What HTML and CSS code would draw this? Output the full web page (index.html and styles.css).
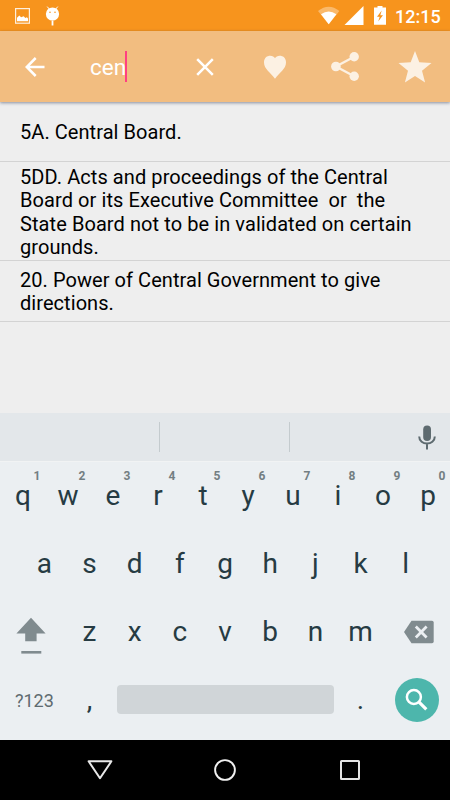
FILE: index.html
```html
<!DOCTYPE html>
<html lang="en">
<head>
<meta charset="utf-8">
<title>Search</title>
<link rel="stylesheet" href="styles.css">
</head>
<body>
<div class="screen">
  <header class="status">
    <svg class="status-icons" width="60" height="31" viewBox="0 0 60 31">
      <rect x="15.6" y="8.6" width="13.8" height="14.6" fill="none" stroke="#fff" stroke-opacity=".85" stroke-width="1.2"/>
      <path d="M17 21.3v-3.500l2.300-2.200 1.800 1.600 2.600-1 1.600 1.700 1.600-.6 1.100 1.200v2.800z" fill="#fff"/>
      <path d="M47.200 6.600l2.300 2.700M57.800 6.600l-2.300 2.700" stroke="#fff" stroke-width="1"/>
      <ellipse cx="52.500" cy="14" rx="6.600" ry="6.600" fill="#fff"/>
      <circle cx="50" cy="12.300" r=".8" fill="#f7941d"/><circle cx="55" cy="12.300" r=".8" fill="#f7941d"/>
      <path d="M52.500 20.500v5" stroke="#fff" stroke-width="1.800"/>
    </svg>
    <svg class="status-signal" width="75" height="31" viewBox="315 0 75 31">
      <path d="M318 11Q328.700 2.500 339.400 11L328.700 24.200z" fill="#fff" opacity=".35"/>
      <path d="M321 14.200Q328.700 9 336.400 14.200L328.700 24.200z" fill="#fff"/>
      <path d="M363.500 6v19H344.500z" fill="#fff"/>
      <path d="M377.500 6h5v1.600h3.500v17.100h-12V7.600h3.500z" fill="#fff"/>
      <path d="M381.700 10.500l-4.700 6.200h2.700l-1.500 4.800 4.800-6.200h-2.700z" fill="#f7941d"/>
    </svg>
    <span class="clock">12:15</span>
  </header>
  <div class="toolbar">
    <svg class="back" width="20" height="20" viewBox="0 0 20 20"><path d="M19.500 10H2M10.700 1L1.700 10l9 9" fill="none" stroke="#fff" stroke-width="2.500"/></svg>
    <div class="query"><span>cen</span><i class="caret"></i></div>
    <svg class="clear" width="18" height="18" viewBox="0 0 18 18"><path d="M1.200 1.200l15.600 15.600M16.800 1.200L1.200 16.800" stroke="#fff" stroke-width="2.500"/></svg>
    <svg class="heart" width="22" height="24" viewBox="0 0 22 24"><path d="M11 3.200C9.200-.6 0-.6 0 7.500 0 14 6.500 17.500 11 23.800 15.500 17.500 22 14 22 7.500 22-.6 12.800-.6 11 3.200z" fill="#fcf1e3"/></svg>
    <svg class="share" width="28" height="29" viewBox="0 0 28 29"><path d="M23.200 4.700L4.900 14.500l18.300 9.800" fill="none" stroke="#fcf1e3" stroke-width="2.300"/><circle cx="23.200" cy="4.700" r="4.700" fill="#fcf1e3"/><circle cx="4.900" cy="14.500" r="4.800" fill="#fcf1e3"/><circle cx="23.200" cy="24.300" r="4.700" fill="#fcf1e3"/></svg>
    <svg class="star" width="34" height="32" viewBox="0 0 34 32"><path d="M17 0l4.300 11.300L33.500 12l-9.500 7.700 3.100 11.900L17 25 6.900 31.600 10 19.700.5 12l12.200-.7z" fill="#fcf1e3"/></svg>
  </div>
  <main class="results">
    <div class="result first">5A. Central Board.</div>
    <div class="result second">5DD. Acts and proceedings of the Central<br>Board or its Executive Committee&nbsp; or&nbsp; the<br>State Board not to be in validated on certain<br>grounds.</div>
    <div class="result third">20. Power of Central Government to give<br>directions.</div>
  </main>
  <div class="suggestions">
    <span class="slot"></span><span class="slot middle"></span>
    <svg class="mic" width="18" height="25" viewBox="0 0 18 25"><rect x="5.200" y=".5" width="7.800" height="15.500" rx="3.900" fill="#5e6b70"/><path d="M1.200 11.500c0 9.400 15.600 9.400 15.600 0M9 18.500v6" fill="none" stroke="#5e6b70" stroke-width="2"/></svg>
  </div>
  <section class="keyboard">
    <div class="keys top">
      <span class="key">q<sup>1</sup></span><span class="key">w<sup>2</sup></span><span class="key">e<sup>3</sup></span><span class="key">r<sup>4</sup></span><span class="key">t<sup>5</sup></span><span class="key">y<sup>6</sup></span><span class="key">u<sup>7</sup></span><span class="key">i<sup>8</sup></span><span class="key">o<sup>9</sup></span><span class="key">p<sup>0</sup></span>
    </div>
    <div class="keys home">
      <span class="key">a</span><span class="key">s</span><span class="key">d</span><span class="key">f</span><span class="key">g</span><span class="key">h</span><span class="key">j</span><span class="key">k</span><span class="key">l</span>
    </div>
    <div class="keys home">
      <span class="wide shift"><svg width="30" height="38" viewBox="0 0 30 38"><path d="M15 .8L29.600 16.500h-9V24.200H9.200V16.500H.4z" fill="#808b8f"/><path d="M5.300 35.300h20" stroke="#808b8f" stroke-width="2.600"/></svg></span>
      <span class="key">z</span><span class="key">x</span><span class="key">c</span><span class="key">v</span><span class="key">b</span><span class="key">n</span><span class="key">m</span>
      <span class="wide delete"><svg width="30" height="24" viewBox="0 0 30 24"><path d="M7.500.7H28q1.700 0 1.700 1.700v19.200q0 1.700-1.700 1.700H7.500L0 12z" fill="#808b8f"/><path d="M11.800 6.600l10.800 10.800M22.600 6.600L11.800 17.400" stroke="#ebeff2" stroke-width="2.800"/></svg></span>
    </div>
    <div class="keys bottom">
      <span class="wide symbols">?123</span><span class="key">,</span><span class="space"></span><span class="key">.</span>
      <span class="wide search"><svg width="44" height="44" viewBox="0 0 44 44"><circle cx="22" cy="22" r="22" fill="#4db6ac"/><circle cx="18.900" cy="19" r="7" fill="none" stroke="#fff" stroke-width="2.500"/><path d="M23.800 23.900l7.500 7.500" stroke="#fff" stroke-width="3.200"/></svg></span>
    </div>
  </section>
  <nav class="navbar">
    <svg width="26" height="20" viewBox="0 0 26 20"><path d="M1.600 1.300h22.800L13 18.200z" fill="none" stroke="#e8e8e8" stroke-width="2" stroke-linejoin="round"/></svg>
    <svg width="22" height="22" viewBox="0 0 22 22"><circle cx="11" cy="11" r="9.900" fill="none" stroke="#f0f0f0" stroke-width="1.900"/></svg>
    <svg width="20" height="20" viewBox="0 0 20 20"><rect x="1" y="1" width="18" height="18" fill="none" stroke="#e4e4e4" stroke-width="2" rx=".5"/></svg>
  </nav>
</div>
</body>
</html>
```
FILE: styles.css
```css
* { box-sizing: border-box; }
body { margin: 0; font-family: Roboto, "Liberation Sans", sans-serif; }
svg { display: block; flex: none; }
.screen { width: 450px; height: 800px; display: flex; flex-direction: column; background: #eee; overflow: hidden; }

.status { height: 31px; flex: none; display: flex; background: #f7941d; color: #fff; }
.status-signal { margin-left: auto; }
.clock { width: 60px; padding-left: 5px; font-size: 18px; font-weight: 500; line-height: 33px; }

.toolbar { height: 71px; flex: none; display: flex; align-items: center; padding: 0 18px 0 25px; background: #f2bd80; box-shadow: 0 1px 3px rgba(40, 50, 80, .5); }
.query { display: flex; align-items: center; width: 106px; margin-left: 45px; color: #fff; font-size: 22.5px; }
.caret { width: 2px; height: 31px; margin: -1px 0 0 -1px; background: #ff4081; }
.heart { margin-left: 50px; }
.share { margin-left: 45px; }
.star { margin-left: 39px; }

.results { flex: 1; }
.result { padding-left: 20px; border-bottom: 1px solid #d3d3d3; font-size: 20px; line-height: 23.4px; letter-spacing: .06px; color: #000; white-space: nowrap; }
.first { height: 60px; padding-top: 19px; }
.second { height: 99px; padding-top: 4px; letter-spacing: .08px; }
.third { height: 61px; padding-top: 8px; }

.suggestions { height: 48px; flex: none; display: flex; align-items: center; background: #e3e7ea; }
.slot { width: 160px; height: 30px; border-right: 1px solid #c4cbce; }
.middle { width: 130px; }
.mic { margin-left: 128px; }

.keyboard { height: 279px; flex: none; background: #ebeff2; color: #263b43; border-top: 1px solid #f1f3f4; }
.keys { height: 68px; display: flex; justify-content: center; align-items: center; }
.top { padding-left: 1px; }
.key { position: relative; width: 45px; flex: none; text-align: center; font-size: 28px; line-height: 68px; }
.home .key { width: 45.2px; }
.key sup { position: absolute; right: 5px; top: 7px; font-size: 12px; font-weight: 700; line-height: 14px; color: #737e82; }
.wide { width: 67px; flex: none; display: flex; align-items: center; }
.shift { padding: 8px 0 0 16px; }
.delete { justify-content: center; padding-left: 4px; }
.symbols { padding-left: 15px; font-size: 18px; color: #5e6b70; }
.space { width: 217px; height: 29px; margin: -2px 4px 0 5px; border-radius: 4px; background: #d0d5d8; }
.search { justify-content: center; }

.navbar { height: 60px; flex: none; display: grid; grid-template-columns: repeat(3, 125px); justify-content: center; justify-items: center; align-items: center; background: #000; }
```
